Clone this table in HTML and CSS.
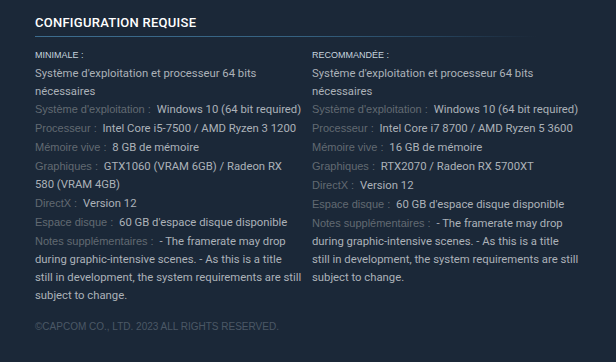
FILE: index.html
```html
<!DOCTYPE html>
<html lang="fr">
<head>
<meta charset="utf-8">
<title>Configuration requise</title>
<link rel="stylesheet" href="styles.css">
</head>
<body>
<section class="sysreq">
  <h2 class="sysreq-title">Configuration requise</h2>
  <div class="sysreq-cols">
    <div class="sysreq-col">
      <div class="tier">Minimale :</div>
      <ul class="reqs">
        <li>Système d'exploitation et processeur 64 bits nécessaires</li>
        <li><span class="lbl">Système d'exploitation :</span> Windows 10 (64 bit required)</li>
        <li><span class="lbl">Processeur :</span> Intel Core i5-7500 / AMD Ryzen 3 1200</li>
        <li><span class="lbl">Mémoire vive :</span> 8 GB de mémoire</li>
        <li><span class="lbl">Graphiques :</span> GTX1060 (VRAM 6GB) / Radeon RX 580 (VRAM 4GB)</li>
        <li><span class="lbl">DirectX :</span> Version 12</li>
        <li><span class="lbl">Espace disque :</span> 60 GB d'espace disque disponible</li>
        <li><span class="lbl">Notes supplémentaires :</span> - The framerate may drop during graphic-intensive scenes. - As this is a title<br>still in development, the system requirements are still subject to change.</li>
      </ul>
    </div>
    <div class="sysreq-col">
      <div class="tier">Recommandée :</div>
      <ul class="reqs">
        <li>Système d'exploitation et processeur 64 bits nécessaires</li>
        <li><span class="lbl">Système d'exploitation :</span> Windows 10 (64 bit required)</li>
        <li><span class="lbl">Processeur :</span> Intel Core i7 8700 / AMD Ryzen 5 3600</li>
        <li><span class="lbl">Mémoire vive :</span> 16 GB de mémoire</li>
        <li><span class="lbl">Graphiques :</span> RTX2070 / Radeon RX 5700XT</li>
        <li><span class="lbl">DirectX :</span> Version 12</li>
        <li><span class="lbl">Espace disque :</span> 60 GB d'espace disque disponible</li>
        <li><span class="lbl">Notes supplémentaires :</span> - The framerate may drop during graphic-intensive scenes. - As this is a title<br>still in development, the system requirements are still subject to change.</li>
      </ul>
    </div>
  </div>
  <p class="copyright">©CAPCOM CO., LTD. 2023 ALL RIGHTS RESERVED.</p>
</section>
</body>
</html>
```
FILE: styles.css
```css
html, body {
  margin: 0;
  padding: 0;
  background: #1b2838;
}
body {
  width: 616px;
  height: 362px;
  overflow: hidden;
}
.sysreq {
  width: 556px;
  padding: 14px 25px 0 35px;
  font-family: Roboto, "Liberation Sans", sans-serif;
}
.sysreq-title {
  margin: 0;
  padding: 0 0 4px;
  font-family: Roboto, "Liberation Sans", sans-serif;
  font-weight: 500;
  font-size: 13px;
  line-height: 18px;
  letter-spacing: 0.02em;
  text-transform: uppercase;
  color: #ffffff;
  border-bottom: 1px solid transparent;
  border-image: linear-gradient(to right, #3d6d8f 0%, #356180 48%, #26445e 72%, #1d2d3f 86%, #1b2838 90%) 1;
}
.sysreq-cols {
  display: flex;
  gap: 9px;
  margin-top: 12px;
}
.sysreq-col {
  width: 268px;
  flex: 0 0 268px;
}
.tier {
  font-family: "Liberation Sans", Arial, sans-serif;
  font-size: 9px;
  line-height: 12px;
  text-transform: uppercase;
  color: #c6d4df;
  margin-bottom: 4px;
}
.reqs {
  list-style: none;
  margin: 0;
  padding: 0;
  font-size: 11.3px;
  line-height: 18px;
  color: #acb2b8;
}
.reqs li {
  margin-bottom: 1px;
}
.reqs li:first-child {
  margin-bottom: 0;
}
.lbl {
  font-family: "Liberation Sans", Arial, sans-serif;
  font-size: 11px;
  line-height: 1;
  color: #626a72;
  margin-right: 3px;
}
.copyright {
  margin: 14px 0 0;
  font-family: "Liberation Sans", Arial, sans-serif;
  font-size: 10px;
  line-height: 14px;
  color: #4b5866;
}
```
